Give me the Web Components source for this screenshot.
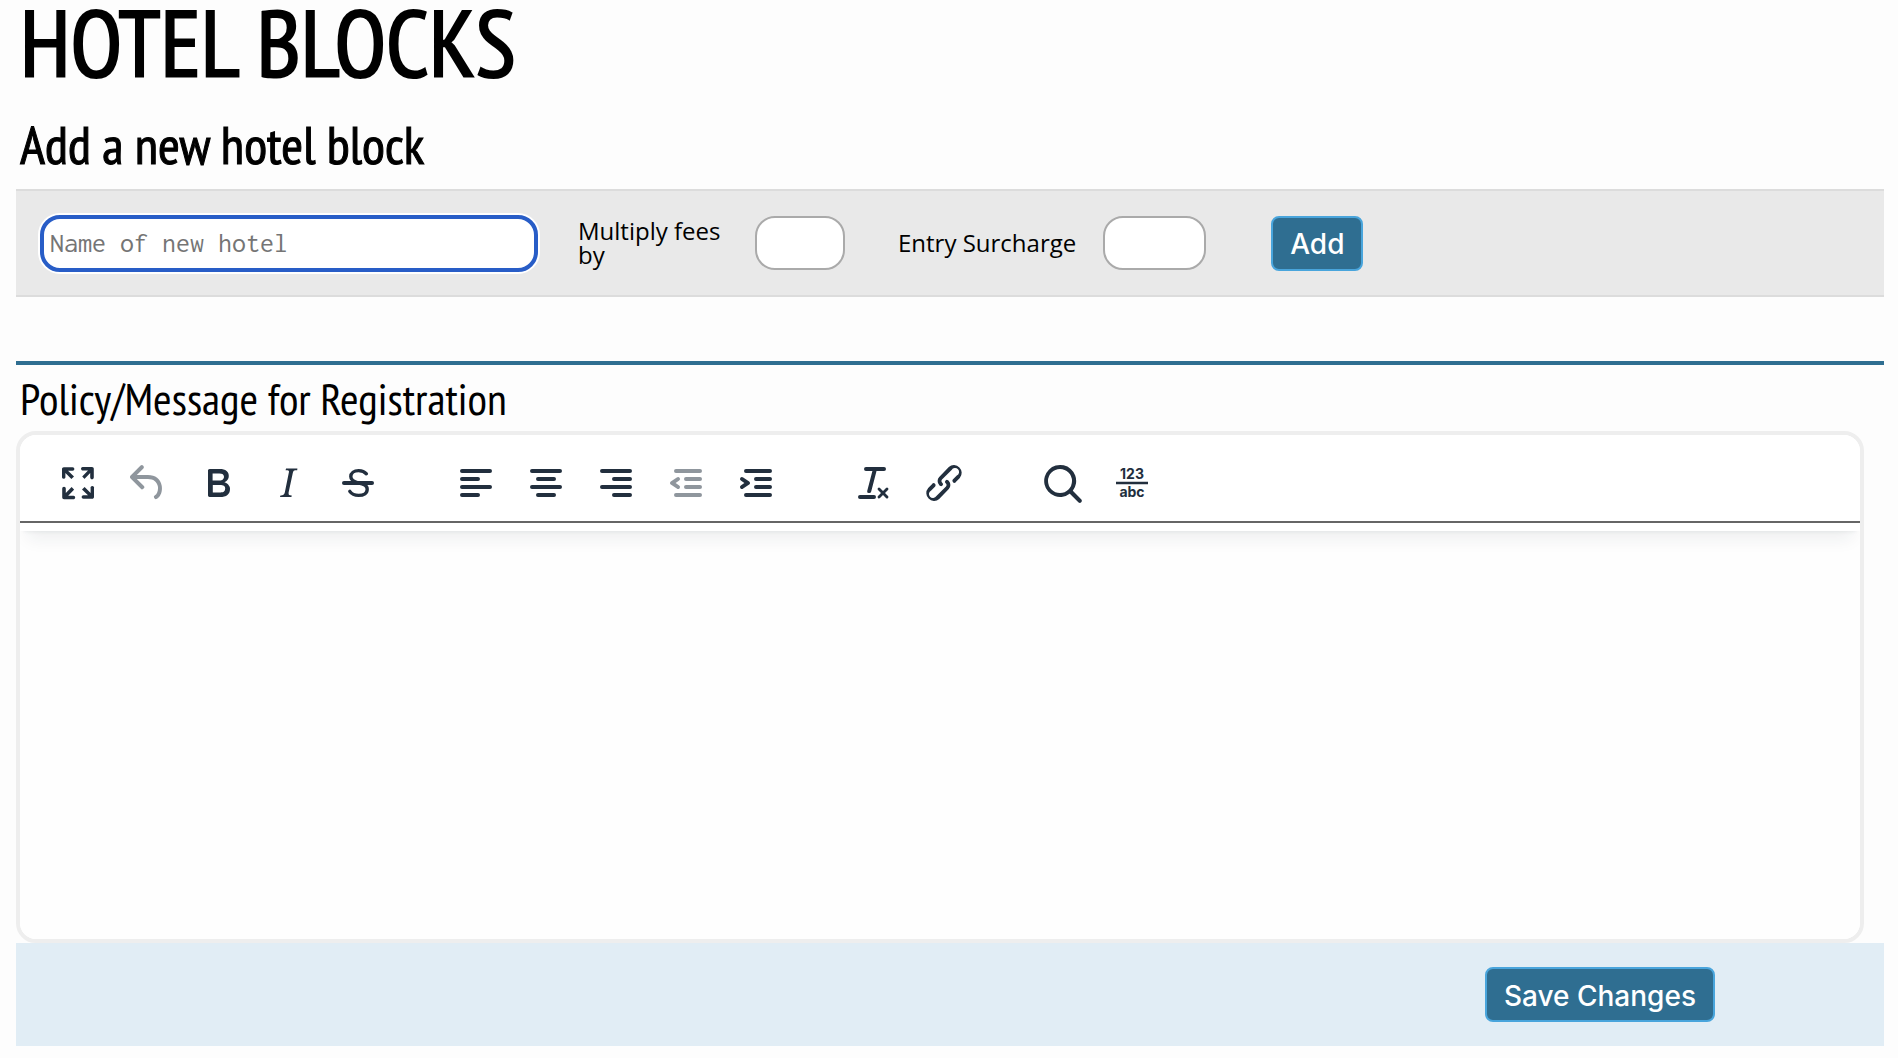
<!DOCTYPE html>
<html lang="en">
<head>
<meta charset="utf-8">
<title>Hotel Blocks</title>
<style>
  :root { --teal: #2f6e91; --sky: #49a5dc; --ink: #222f3e; }
  body { margin: 0; background: #fdfdfd; color: #000; font-family: "Open Sans", "Noto Sans", sans-serif; font-size: 24px; line-height: 24px; }
</style>
</head>
<body>
<hotel-page>
  <page-heading level="1">HOTEL BLOCKS</page-heading>
  <page-heading level="2">Add a new hotel block</page-heading>
  <hotel-block-form></hotel-block-form>
  <rich-editor>Policy/Message for Registration</rich-editor>
  <action-bar><ui-button>Save Changes</ui-button></action-bar>
</hotel-page>
<script>
const define = (name, html, setup) => {
  const tpl = document.createElement('template');
  tpl.innerHTML = html;
  customElements.define(name, class extends HTMLElement {
    constructor() {
      super();
      this.attachShadow({ mode: 'open' }).append(tpl.content.cloneNode(true));
    }
    connectedCallback() { if (setup) setup(this, this.shadowRoot); }
  });
};

define('hotel-page', `
  <style>
    :host { display: block; }
    main { display: flex; flex-direction: column; padding: 0 14px 12px 16px; }
  </style>
  <main><slot></slot></main>`);

define('page-heading', `
  <style>
    :host { display: block; font-family: "PT Sans Narrow", "Roboto Condensed", "Liberation Sans", sans-serif; padding-left: 4px; }
    h1, h2 { margin: 0; white-space: nowrap; }
    h1 { font-size: 94px; line-height: 84px; font-weight: 400; -webkit-text-stroke: 2px currentColor; padding-bottom: 31px; }
    h2 { font-size: 53px; line-height: 60px; font-weight: 400; -webkit-text-stroke: 1px currentColor; padding-bottom: 14px; }
  </style>`, (host, root) => {
    const h = document.createElement('h' + host.getAttribute('level'));
    h.append(document.createElement('slot'));
    root.append(h);
  });

define('ui-button', `
  <style>
    :host { display: block; }
    button { box-sizing: border-box; height: 55px; padding: 2px 17px 0; border: 2px solid var(--sky); border-radius: 8px;
      background: var(--teal); color: #fff; font: 500 28px/32px Inter, sans-serif; white-space: nowrap; }
  </style>
  <button type="button"><slot></slot></button>`);

define('hotel-block-form', `
  <style>
    :host { display: block; }
    form { display: flex; align-items: center; box-sizing: border-box; min-height: 108px; padding-left: 24px;
      background: #e9e9e9; border-top: 2px solid #dcdcdc; border-bottom: 2px solid #dcdcdc; }
    input { box-sizing: border-box; height: 54px; border: 2px solid #aaa; border-radius: 20px; background: #fff;
      padding: 0 8px; font: 24px Inconsolata, "Liberation Mono", monospace; color: #000; }
    .name { width: 498px; height: 57px; border: 4px solid #285dc7; box-shadow: 0 0 0 2px #fff; padding: 0 6px 2px; font-size: 28px; }
    .name::placeholder { color: #757575; opacity: 1; }
    .field { display: flex; align-items: center; }
    .fees { margin-left: 40px; gap: 24px; }
    .fees label { width: 153px; }
    .fees input { width: 90px; }
    .entry { margin-left: 53px; gap: 27px; }
    .entry input { width: 103px; }
    ui-button { margin-left: 65px; }
  </style>
  <form>
    <input class="name" type="text" placeholder="Name of new hotel" aria-label="Name of new hotel">
    <div class="field fees"><label for="fees">Multiply fees by</label><input id="fees" type="text"></div>
    <div class="field entry"><label for="entry">Entry Surcharge</label><input id="entry" type="text"></div>
    <ui-button>Add</ui-button>
  </form>`);

const bars = d => `<path d="${d}" fill="none" stroke="currentColor" stroke-width="2" stroke-linecap="round"/>`;
const icons = {
  fullscreen: '<path d="M15.3 10l-1.2-1.3 2.9-3h-2.3a.9.9 0 1 1 0-1.7H19c.5 0 .9.4.9.9v4.4a.9.9 0 1 1-1.8 0V7l-2.9 3zm0 4l3 3v-2.3a.9.9 0 1 1 1.7 0V19c0 .5-.4.9-.9.9h-4.4a.9.9 0 1 1 0-1.8H17l-3-2.9 1.3-1.2zM10 15.4l-2.9 3h2.3a.9.9 0 1 1 0 1.7H5a.9.9 0 0 1-.9-.9v-4.4a.9.9 0 1 1 1.8 0V17l2.9-3 1.2 1.3zM8.7 10L5.7 7v2.3a.9.9 0 0 1-1.7 0V5c0-.5.4-.9.9-.9h4.4a.9.9 0 0 1 0 1.8H7l3 2.9-1.3 1.2z"/>',
  undo: '<path d="M6.4 8H12c3.7 0 6.2 2 6.8 5.1.6 2.7-.4 5.6-2.3 6.8a1 1 0 0 1-1-1.8c1.1-.6 1.8-2.7 1.4-4.6-.5-2.1-2.1-3.5-4.9-3.5H6.4l3.3 3.3a1 1 0 1 1-1.4 1.4l-5-5a1 1 0 0 1 0-1.4l5-5a1 1 0 0 1 1.4 1.4L6.4 8z"/>',
  bold: '<path d="M7.8 19c-.3 0-.5 0-.6-.2l-.2-.5V5.7c0-.2 0-.4.2-.5l.6-.2h5c1.5 0 2.7.3 3.5 1 .7.6 1.1 1.4 1.1 2.5a3 3 0 0 1-.6 1.9c-.4.6-1 1-1.6 1.2.4.1.9.3 1.3.6s.8.7 1 1.2c.4.4.5 1 .5 1.6 0 1.3-.4 2.3-1.3 3-.8.7-2.1 1-3.8 1H7.8zm5-8.3c.6 0 1.2-.1 1.6-.5.4-.3.6-.7.6-1.3 0-1.1-.8-1.7-2.3-1.7H9.3v3.5h3.4zm.5 6c.7 0 1.3-.1 1.7-.4.4-.4.6-.9.6-1.5s-.2-1-.7-1.4c-.4-.3-1-.4-2-.4H9.4v3.8h4z"/>',
  italic: '<path d="M16.7 4.7l-.1.9h-.3c-.6 0-1 0-1.4.3-.3.3-.4.6-.5 1.1l-2.1 9.8v.6c0 .5.4.8 1.4.8h.2l-.2.8H8l.2-.8h.2c1.1 0 1.8-.5 2-1.5l2-9.8.1-.5c0-.6-.4-.8-1.4-.8h-.3l.2-.9h5.8z"/>',
  strike: bars('M5 12H19') + '<path d="M16.2 7.4C15.3 6.3 14 5.8 12.3 5.8 10 5.8 8.4 7 8.4 8.8c0 1.6 1.3 2.5 3.6 3.1 3 .7 4.6 1.3 4.6 3.2 0 2-1.7 3.1-4.3 3.1-2.1 0-3.5-.7-4.4-2" fill="none" stroke="currentColor" stroke-width="1.7" stroke-linecap="round"/>',
  left: bars('M5 6H19M5 10H13M5 14H19M5 18H13'),
  center: bars('M5 6H19M8 10H16M5 14H19M8 18H16'),
  right: bars('M5 6H19M11 10H19M5 14H19M11 18H19'),
  outdent: bars('M7 6H19M12 10H19M12 14H19M7 18H19') + '<path d="M8.6 13.2a1 1 0 0 1-1.2 1.6l-3-2a1 1 0 0 1 0-1.6l3-2a1 1 0 0 1 1.2 1.6L6.8 12l1.8 1.2z"/>',
  indent: bars('M7 6H19M12 10H19M12 14H19M7 18H19') + '<path d="M6.2 12l-1.8-1.2a1 1 0 0 1 1.2-1.6l3 2a1 1 0 0 1 0 1.6l-3 2a1 1 0 1 1-1.2-1.6L6.2 12z"/>',
  clear: '<path d="M13.2 6a1 1 0 0 1 0 .2l-2.6 10a1 1 0 0 1-1 .8h-.2a.8.8 0 0 1-.8-1l2.6-10H8a1 1 0 1 1 0-2h9a1 1 0 0 1 0 2h-3.8zM5 18h7a1 1 0 0 1 0 2H5a1 1 0 0 1 0-2zm13 1.5L16.5 18 15 19.5a.7.7 0 0 1-1-1l1.5-1.5-1.5-1.5a.7.7 0 0 1 1-1l1.5 1.5 1.5-1.5a.7.7 0 0 1 1 1L17.5 17l1.5 1.5a.7.7 0 0 1-1 1z"/>',
  link: '<path d="M6.2 12.3a1 1 0 0 1 1.4 1.4l-2 2a2 2 0 1 0 2.6 2.8l4.8-4.8a1 1 0 0 0 0-1.4 1 1 0 1 1 1.4-1.3 2.9 2.9 0 0 1 0 4L9.6 20a3.9 3.9 0 0 1-5.5-5.5l2-2zm11.6-.6a1 1 0 0 1-1.4-1.4l2-2a2 2 0 1 0-2.6-2.8L11 10.3a1 1 0 0 0 0 1.4A1 1 0 1 1 9.6 13a2.9 2.9 0 0 1 0-4L14.4 4a3.9 3.9 0 0 1 5.5 5.5l-2 2z"/>',
  search: '<path d="M16 17.3a8 8 0 1 1 1.4-1.4l4.3 4.4a1 1 0 0 1-1.4 1.4l-4.4-4.3zm-5-.3a6 6 0 1 0 0-12 6 6 0 0 0 0 12z"/>',
  count: '<path d="M4 11.4h16v1.2H4z"/><text x="12" y="10" text-anchor="middle" font-size="7">123</text><text x="12" y="19" text-anchor="middle" font-size="7">abc</text>'
};

define('tool-button', `
  <style>
    :host { display: block; }
    button { display: flex; align-items: center; justify-content: center; width: 70px; height: 56px; padding: 0; border: 0; background: none; color: var(--ink); }
    button:disabled { opacity: .5; }
    svg { width: 48px; height: 48px; fill: currentColor; font-family: Inter, sans-serif; font-weight: 700; }
  </style>
  <button type="button"></button>`, (host, root) => {
    const b = root.querySelector('button');
    b.innerHTML = `<svg viewBox="0 0 24 24" aria-hidden="true">${icons[host.getAttribute('icon')]}</svg>`;
    b.setAttribute('aria-label', host.getAttribute('label'));
    b.disabled = host.hasAttribute('off');
  });

define('rich-editor', `
  <style>
    :host { display: flex; flex-direction: column; margin-top: 64px; border-top: 4px solid var(--teal); }
    label { padding: 10px 4px; font: 45px/46px "PT Sans Narrow", "Roboto Condensed", "Liberation Sans", sans-serif; }
    .frame { display: flex; flex-direction: column; margin-right: 20px; border: 4px solid #eee; border-radius: 20px; background: #fff; overflow: hidden; }
    header { position: relative; padding-bottom: 8px; background: #fff;
      box-shadow: 0 4px 4px -4px rgba(34,47,62,.1), 0 16px 16px -8px rgba(34,47,62,.07); }
    .tools { display: flex; gap: 48px; padding: 20px 23px 10px; border-bottom: 2px solid #666; }
    .group { display: flex; }
    textarea { box-sizing: border-box; height: 408px; border: 0; padding: 20px; resize: none; background: #fefefe; font: inherit; }
  </style>
  <label for="message"><slot></slot></label>
  <div class="frame">
    <header><div class="tools" role="toolbar">
      <div class="group">
        <tool-button icon="fullscreen" label="Fullscreen"></tool-button>
        <tool-button icon="undo" label="Undo" off></tool-button>
        <tool-button icon="bold" label="Bold"></tool-button>
        <tool-button icon="italic" label="Italic"></tool-button>
        <tool-button icon="strike" label="Strikethrough"></tool-button>
      </div>
      <div class="group">
        <tool-button icon="left" label="Align left"></tool-button>
        <tool-button icon="center" label="Align center"></tool-button>
        <tool-button icon="right" label="Align right"></tool-button>
        <tool-button icon="outdent" label="Decrease indent" off></tool-button>
        <tool-button icon="indent" label="Increase indent"></tool-button>
      </div>
      <div class="group">
        <tool-button icon="clear" label="Clear formatting"></tool-button>
        <tool-button icon="link" label="Insert link"></tool-button>
      </div>
      <div class="group">
        <tool-button icon="search" label="Find and replace"></tool-button>
        <tool-button icon="count" label="Word count"></tool-button>
      </div>
    </div></header>
    <textarea id="message"></textarea>
  </div>`);

define('action-bar', `
  <style>
    :host { display: flex; justify-content: flex-end; padding: 24px 169px 24px 0; background: #e1edf5; }
  </style>
  <slot></slot>`);
</script>
</body>
</html>
